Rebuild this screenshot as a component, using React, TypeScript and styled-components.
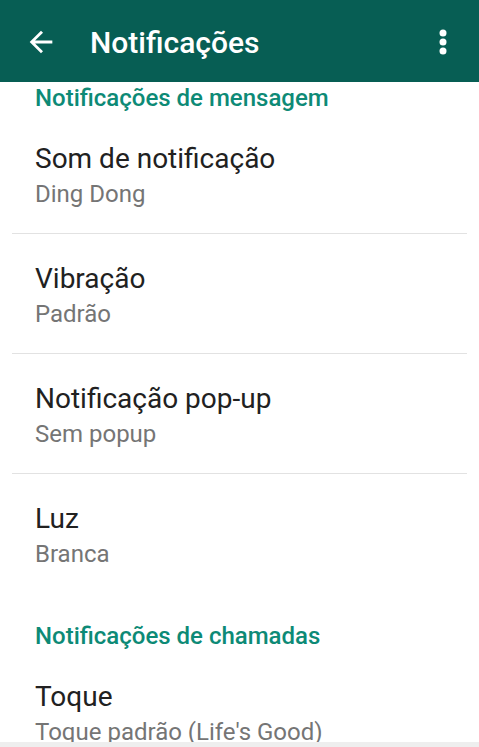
import React from "react";
import styled, { createGlobalStyle } from "styled-components";

const GlobalStyle = createGlobalStyle`
  html, body {
    margin: 0;
    padding: 0;
    background: #ffffff;
  }
  body {
    font-family: Roboto, "Noto Sans", "Liberation Sans", sans-serif;
  }
`;

const Screen = styled.div`
  width: 479px;
  height: 747px;
  display: flex;
  flex-direction: column;
  overflow: hidden;
  background: #ffffff;
`;

const Toolbar = styled.header`
  height: 82px;
  flex-shrink: 0;
  display: flex;
  align-items: center;
  background: #075e54;
  color: #ffffff;
  padding: 2px 22px 0 24px;
  box-sizing: border-box;
`;

const IconButton = styled.button<{ $w: number }>`
  all: unset;
  display: flex;
  align-items: center;
  justify-content: center;
  width: ${(p) => p.$w}px;
  height: 34px;
  cursor: pointer;
`;

const Title = styled.h1`
  flex: 1;
  margin: 0 0 0 32px;
  font-size: 30px;
  font-weight: 500;
  letter-spacing: 0;
`;

const List = styled.div`
  flex: 1;
  overflow: hidden;
`;

const SectionHeader = styled.div<{ $top: number }>`
  padding: ${(p) => p.$top}px 35px 0;
  font-size: 24px;
  font-weight: 500;
  line-height: 32px;
  color: #0d8a76;
`;

const Item = styled.div<{ $last?: boolean }>`
  margin: 0 12px;
  padding: 28px 23px 21px;
  border-bottom: 1px solid ${(p) => (p.$last ? "transparent" : "#e2e2e2")};
`;

const ItemTitle = styled.div`
  font-size: 28px;
  line-height: 34px;
  color: #212121;
`;

const ItemSub = styled.div`
  font-size: 24px;
  line-height: 36px;
  color: #757575;
`;

const NavEdge = styled.div`
  height: 5px;
  flex-shrink: 0;
  background: #eeeeee;
`;

const BackArrow = () => (
  <svg width="34" height="34" viewBox="0 0 24 24" fill="#ffffff">
    <path d="M20 11H7.83l5.59-5.59L12 4l-8 8 8 8 1.41-1.41L7.83 13H20v-2z" />
  </svg>
);

const MoreDots = () => (
  <svg width="8" height="26" viewBox="0 0 8 26" fill="#ffffff">
    <circle cx="4" cy="4" r="3.5" />
    <circle cx="4" cy="13" r="3.5" />
    <circle cx="4" cy="22" r="3.5" />
  </svg>
);

const messageSettings = [
  { title: "Som de notificação", sub: "Ding Dong" },
  { title: "Vibração", sub: "Padrão" },
  { title: "Notificação pop-up", sub: "Sem popup" },
  { title: "Luz", sub: "Branca" },
];

export default function App() {
  return (
    <>
      <GlobalStyle />
      <Screen>
        <Toolbar>
          <IconButton $w={34}>
            <BackArrow />
          </IconButton>
          <Title>Notificações</Title>
          <IconButton $w={28}>
            <MoreDots />
          </IconButton>
        </Toolbar>
        <List>
          <SectionHeader $top={0}>Notificações de mensagem</SectionHeader>
          {messageSettings.map((s, i) => (
            <Item key={i} $last={i === messageSettings.length - 1}>
              <ItemTitle>{s.title}</ItemTitle>
              <ItemSub>{s.sub}</ItemSub>
            </Item>
          ))}
          <SectionHeader $top={26}>Notificações de chamadas</SectionHeader>
          <Item $last>
            <ItemTitle>Toque</ItemTitle>
            <ItemSub>Toque padrão (Life's Good)</ItemSub>
          </Item>
        </List>
        <NavEdge />
      </Screen>
    </>
  );
}
